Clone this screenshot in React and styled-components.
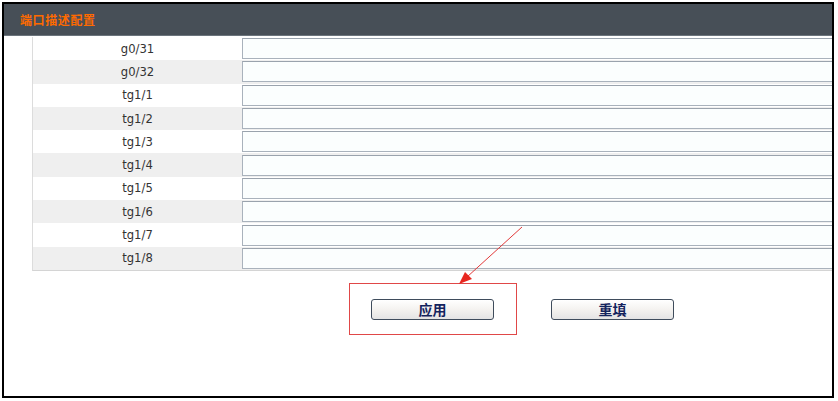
import React from 'react';
import styled, { createGlobalStyle } from 'styled-components';

const ports = ['g0/31', 'g0/32', 'tg1/1', 'tg1/2', 'tg1/3', 'tg1/4', 'tg1/5', 'tg1/6', 'tg1/7', 'tg1/8'];

const GlobalStyle = createGlobalStyle`
  html, body {
    margin: 0;
    padding: 0;
    background: #ffffff;
  }
  body {
    font-family: 'DejaVu Sans', 'Noto Sans CJK SC', sans-serif;
  }
`;

const App = () => {
  return (
    <>
      <GlobalStyle />
      <Frame>
        <Header>
          <HeaderTitle>端口描述配置</HeaderTitle>
        </Header>
        <PortTable>
          {ports.map((name, i) => (
            <PortRow key={name} $alt={i % 2 === 1}>
              <PortLabel>{name}</PortLabel>
              <PortCell>
                <DescInput type='text' />
              </PortCell>
            </PortRow>
          ))}
        </PortTable>
        <ButtonBar>
          <ActionButton>应用</ActionButton>
          <ActionButton>重填</ActionButton>
        </ButtonBar>
        <Highlight />
        <Arrow width='70' height='64' viewBox='0 0 70 64'>
          <line x1='67' y1='2' x2='12' y2='52' stroke='#e23a3a' strokeWidth='1' />
          <polygon points='4,59 10,47 17,54' fill='#e8261f' />
        </Arrow>
      </Frame>
    </>
  );
};

const Frame = styled.div`
  position: relative;
  box-sizing: border-box;
  margin: 2px 0 0 2px;
  width: 832px;
  height: 396px;
  border: 2px solid #000;
  overflow: hidden;
  background: #fff;
`;

const Header = styled.div`
  display: flex;
  align-items: center;
  height: 32px;
  padding-left: 16px;
  background: #474f57;
  border-bottom: 1px solid #6b747c;
  box-sizing: border-box;
`;

const HeaderTitle = styled.span`
  font-family: 'Noto Sans CJK SC', sans-serif;
  font-weight: 700;
  font-size: 12px;
  letter-spacing: 0.6px;
  color: #ff6a00;
  margin-top: -1px;
`;

const PortTable = styled.div`
  display: flex;
  flex-direction: column;
  margin: 1px 0 0 28px;
  width: 920px;
  border-left: 1px solid #dcdcdc;
  border-bottom: 1px solid #d4d4d4;
`;

const PortRow = styled.div`
  display: flex;
  align-items: center;
  height: 23.3px;
  background: ${(p) => (p.$alt ? '#efefef' : '#ffffff')};
`;

const PortLabel = styled.div`
  flex: 0 0 209px;
  text-align: center;
  font-family: 'DejaVu Sans', sans-serif;
  font-size: 11.6px;
  color: #333;
`;

const PortCell = styled.div`
  flex: 1;
  display: flex;
  align-items: center;
`;

const DescInput = styled.input`
  box-sizing: border-box;
  width: 700px;
  height: 21px;
  margin: 0;
  padding: 0 3px;
  border: 1px solid #a9b2bc;
  border-top-color: #9aa3ad;
  background: #fbfefe;
  outline: none;
`;

const ButtonBar = styled.div`
  display: flex;
  gap: 57px;
  padding: 28px 0 0 367px;
`;

const ActionButton = styled.button`
  box-sizing: border-box;
  width: 123px;
  height: 21px;
  padding: 0;
  border: 1px solid #3f4c5c;
  border-radius: 3px;
  background: linear-gradient(#ffffff, #f3f1ee 55%, #e4e4e4);
  font-family: 'Noto Sans CJK SC', sans-serif;
  font-weight: 700;
  font-size: 14px;
  color: #14245e;
  line-height: 19px;
`;

const Highlight = styled.div`
  position: absolute;
  left: 345px;
  top: 279px;
  width: 166px;
  height: 50px;
  border: 1px solid #e04848;
`;

const Arrow = styled.svg`
  position: absolute;
  left: 451px;
  top: 221px;
`;

export default App;
